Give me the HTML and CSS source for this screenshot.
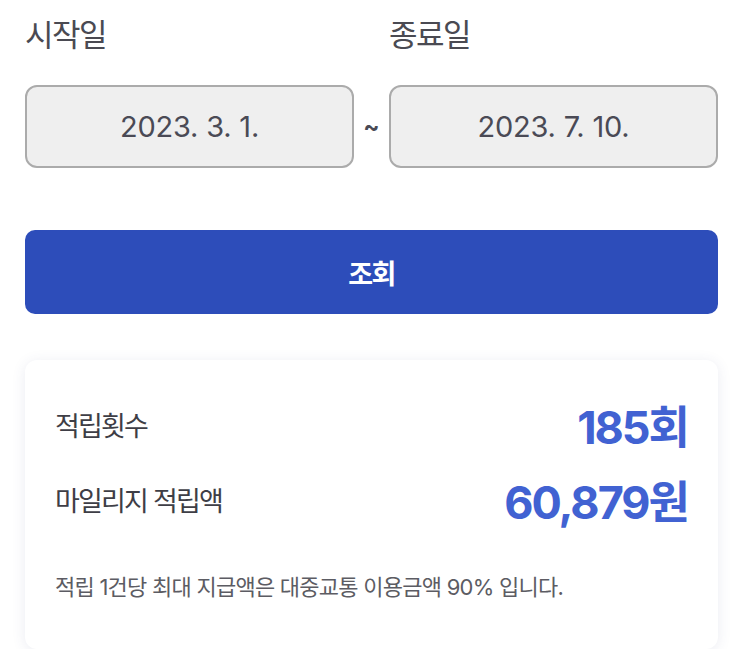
FILE: index.html
```html
<!DOCTYPE html>
<html lang="ko">
<head>
<meta charset="utf-8">
<link rel="stylesheet" href="styles.css">
</head>
<body>
<main class="page">
  <div class="labels">
    <span class="label">시작일</span>
    <span class="label">종료일</span>
  </div>
  <div class="dates">
    <div class="date-box">2023. 3. 1.</div>
    <span class="tilde">~</span>
    <div class="date-box">2023. 7. 10.</div>
  </div>
  <button class="search-btn">조회</button>
  <section class="card">
    <div class="row">
      <span class="row-label">적립횟수</span>
      <span class="row-value">185회</span>
    </div>
    <div class="row">
      <span class="row-label">마일리지 적립액</span>
      <span class="row-value">60,879원</span>
    </div>
    <p class="note">적립 1건당 최대 지급액은 대중교통 이용금액 90% 입니다.</p>
  </section>
</main>
</body>
</html>
```

FILE: styles.css
```css
* { box-sizing: border-box; }
html, body { margin: 0; padding: 0; background: #ffffff; }
body {
  font-family: "Inter", "Noto Sans CJK KR", "Noto Sans", sans-serif;
  color: #45454d;
}
.page {
  width: 743px;
  padding: 14px 25px 0 25px;
}
.labels {
  display: grid;
  grid-template-columns: 329px 329px;
  column-gap: 35px;
}
.label {
  font-size: 31px;
  line-height: 42px;
  letter-spacing: -1.5px;
  color: #4a4a52;
}
.dates {
  display: flex;
  align-items: center;
  margin-top: 29px;
}
.date-box {
  width: 329px;
  height: 83px;
  background: #efefef;
  border: 2px solid #ababab;
  border-radius: 12px;
  display: flex;
  align-items: center;
  justify-content: center;
  font-size: 29px;
  letter-spacing: -0.2px;
  color: #4a4a55;
}
.tilde {
  width: 35px;
  text-align: center;
  font-size: 24px;
  font-weight: 700;
  color: #4a4a55;
}
.search-btn {
  display: block;
  width: 100%;
  height: 84px;
  margin-top: 62px;
  border: none;
  border-radius: 10px;
  background: #2d4dba;
  color: #ffffff;
  font-family: "Noto Sans CJK KR", sans-serif;
  font-size: 27px;
  font-weight: 700;
  letter-spacing: -1.5px;
}
.card {
  margin-top: 46px;
  height: 289px;
  background: #ffffff;
  border-radius: 12px;
  box-shadow: 0 2px 14px rgba(60, 70, 130, 0.10);
  padding: 36px 30px 0 30px;
}
.row {
  display: flex;
  justify-content: space-between;
  align-items: center;
  height: 56px;
}
.row + .row { margin-top: 19px; }
.row-label {
  font-size: 27px;
  letter-spacing: -1.8px;
  color: #3e3e46;
}
.row-value {
  font-size: 45px;
  font-weight: 700;
  letter-spacing: -2px;
  color: #4162d2;
}
.note {
  margin: 42px 0 0 0;
  font-size: 22px;
  letter-spacing: -0.75px;
  color: #5c5c63;
}
```
